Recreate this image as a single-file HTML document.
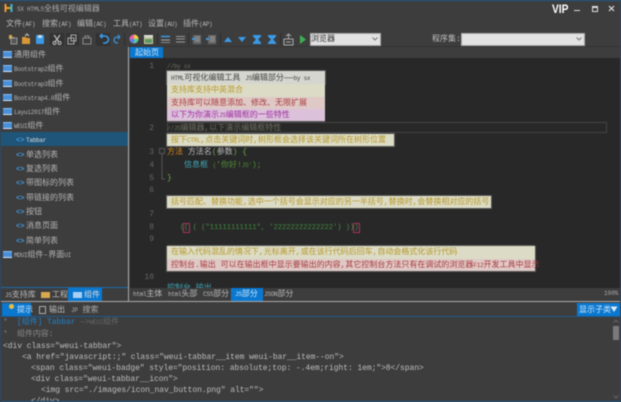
<!DOCTYPE html>
<html><head><meta charset="utf-8"><style>
html,body{margin:0;padding:0;background:#3d3d3d}
#a{position:relative;width:621px;height:402px;overflow:hidden;background:#3d3d3d;filter:blur(.5px);font-family:"Liberation Mono","WenQuanYi Zen Hei","Noto Sans CJK SC",monospace;font-size:8px;line-height:10px;color:#bbb}
.t{position:absolute;white-space:nowrap;margin-top:2px}
.r{position:absolute}
i{font-style:normal;font-size:6px;letter-spacing:-.25px}
.m{color:#b8b8b8}
.tr{color:#b5b5b5}
.g{color:#6e6e60}
.n{color:#666;width:12px;text-align:right;left:142px}
.c{color:#bdbdbd;font-size:8px;letter-spacing:-.07px}
.f{position:absolute;width:9px;height:5px;background:#4a90d8;border-top:1px solid #8fc0f0;border-bottom:1px solid #cfe3f7}
.sep{position:absolute;top:33px;width:1px;height:12px;background:#2e2e2e}
.b{left:16px;color:#3f9ae0;font-size:7px;font-weight:bold}
</style></head><body><div id="a">
<div class="r" style="left:0;top:0;width:621px;height:1px;background:#1d5a8c"></div>

<svg class="r" style="left:4px;top:3px" width="10" height="10"><path d="M1.5 1v8M1.5 5h6" stroke="#e8a030" stroke-width="2" fill="none"/><path d="M7.5 1v8" stroke="#3fb8c8" stroke-width="2"/></svg>
<div class="t" style="left:17px;top:3px;color:#a8a8a8"><i>SX HTML5</i>全栈可视编辑器</div>

<div class="t m" style="left:6px;top:18px">文件<i>(AF)</i></div>
<div class="t m" style="left:42px;top:18px">搜索<i>(AF)</i></div>
<div class="t m" style="left:77px;top:18px">编辑<i>(AC)</i></div>
<div class="t m" style="left:113px;top:18px">工具<i>(AT)</i></div>
<div class="t m" style="left:148px;top:18px">设置<i>(AU)</i></div>
<div class="t m" style="left:183px;top:18px">插件<i>(AP)</i></div>

<div class="t" style="left:552px;top:0;color:#fff;font:bold 12px 'Liberation Sans',sans-serif;transform:scaleX(.85);transform-origin:left">VIP</div>
<div class="r" style="left:574px;top:10px;width:6px;height:1px;background:#ddd"></div>
<div class="r" style="left:592px;top:6px;width:4px;height:3px;border:1px solid #ddd;border-top-width:2px"></div>
<svg class="r" style="left:608px;top:5px" width="7" height="7"><path d="M1 1l5 5M6 1l-5 5" stroke="#ddd" stroke-width="1.2"/></svg>

<!-- toolbar -->
<svg class="r" style="left:0;top:30px" width="310" height="18">
<path d="M9 5h3v2h2v2h-5z" fill="#d8a850"/><rect x="11" y="8" width="6" height="6" fill="#555" stroke="#aaa" stroke-width=".8"/>
<path d="M22 7h4l1 1h3v6h-8z" fill="#d89838"/><path d="M25 6l2-2 2 2" stroke="#ccc" fill="none"/>
<rect x="36" y="5" width="8" height="9" rx="1" fill="#3a9ae8"/><rect x="38" y="5" width="4" height="3" fill="#bcdcf4"/>
<rect x="51" y="3" width="13" height="13" fill="#333"/><path d="M54 5l5 7M60 5l-5 7" stroke="#bbb" stroke-width="1.2"/><circle cx="54.500" cy="13" r="1.500" fill="none" stroke="#bbb"/><circle cx="59.500" cy="13" r="1.500" fill="none" stroke="#bbb"/>
<rect x="66" y="3" width="13" height="13" fill="#333"/><rect x="68" y="8" width="6" height="6" fill="none" stroke="#aaa"/><rect x="71" y="5" width="5" height="6" fill="none" stroke="#aaa"/>
<path d="M83 8h8v6h-8zM85 8v-2h4v2" fill="none" stroke="#888"/>
<rect x="97" y="3" width="13" height="13" fill="#333"/><path d="M100 6h5a3 3 0 0 1 0 7h-2M100 6l2.500-2M100 6l2.500 2" stroke="#3a9ae8" stroke-width="1.600" fill="none"/>
<path d="M120 7h-3a3 3 0 0 0 0 6h1M120 7l-2-2M120 7l-2 2" stroke="#3a90d8" stroke-width="1.300" fill="none"/>
<circle cx="134" cy="9" r="4.500" fill="#e860a8"/><path d="M134 9V4.500a4.500 4.500 0 0 1 4.500 4.500z" fill="#e8d040"/><path d="M134 9h4.500a4.500 4.500 0 0 1-4.500 4.500z" fill="#50c8a0"/><path d="M134 9v4.500A4.500 4.500 0 0 1 129.500 9z" fill="#6080e0"/>
<rect x="144" y="5" width="9" height="9" fill="#c8c8a0"/><rect x="145" y="9" width="7" height="4" fill="#5a9a60"/><rect x="144" y="5" width="9" height="2" fill="#ddd"/>
<path d="M161 6.500h9" stroke="#3a9ae8" stroke-width="1.500"/><path d="M161 10h9" stroke="#aaa"/><path d="M161 12.500h9" stroke="#888"/>
<path d="M176 6.500h9M176 9h9M176 12h9" stroke="#999" stroke-width="1.100"/>
<rect x="193" y="5" width="8" height="9" fill="#666"/><path d="M195 7h5M195 9h5M195 11h5" stroke="#aaa" stroke-width=".8"/><rect x="192" y="8" width="3" height="2" fill="#3a9ae8"/>
<rect x="208" y="5" width="8" height="9" fill="#666"/><path d="M210 7h5M210 9h5M210 11h5" stroke="#aaa" stroke-width=".8"/><rect x="206" y="8" width="3" height="2" fill="#3a9ae8"/>
<path d="M224 12l4-5 4 5z" fill="#3a9ae8"/>
<path d="M238 7h8l-4 5z" fill="#3a9ae8"/>
<path d="M253 5h8v1.500l-3 3 3 3V14h-8v-1.500l3-3-3-3z" fill="#3a9ae8"/>
<path d="M268 5h8v1.500l-3 3 3 3V14h-8v-1.500l3-3-3-3z" fill="#3a9ae8"/>
<rect x="284" y="9" width="9" height="6" fill="none" stroke="#aaa"/><path d="M288.500 9V4M286 6l2.500-2 2.500 2" stroke="#aaa" fill="none"/><path d="M286 12h5" stroke="#aaa"/>
<path d="M300 5l6 4.500-6 4.500z" fill="#3cb050"/>
</svg>
<div class="sep" style="left:50px"></div><div class="sep" style="left:96px"></div><div class="sep" style="left:124px"></div><div class="sep" style="left:157px"></div><div class="sep" style="left:188px"></div><div class="sep" style="left:220px"></div><div class="sep" style="left:280px"></div>

<div class="r" style="left:310px;top:33px;width:69px;height:11px;background:#e2e2e2;border:1px solid #aaa;box-sizing:content-box"></div>
<div class="t" style="left:311px;top:33px;color:#333">浏览器</div>
<svg class="r" style="left:372px;top:37px" width="6" height="4"><path d="M.5.5l2.500 2.500L5.500.5" stroke="#777" fill="none"/></svg>
<div class="t" style="left:432px;top:33px;color:#c0c0c0">程序集:</div>
<div class="r" style="left:461px;top:33px;width:122px;height:11px;background:#e2e2e2;border:1px solid #aaa"></div>
<svg class="r" style="left:576px;top:37px" width="6" height="4"><path d="M.5.5l2.500 2.500L5.500.5" stroke="#777" fill="none"/></svg>

<div class="r" style="left:129px;top:46px;width:492px;height:1px;background:#333"></div>

<!-- tree -->
<div class="r" style="left:1px;top:132px;width:127px;height:14px;background:#1f5578"></div>
<div class="f" style="left:3px;top:51px"></div><div class="t tr" style="left:14px;top:49px">通用组件</div>
<div class="f" style="left:3px;top:65px"></div><div class="t tr" style="left:14px;top:63px"><i>Bootstrap2</i>组件</div>
<div class="f" style="left:3px;top:80px"></div><div class="t tr" style="left:14px;top:78px"><i>Bootstrap3</i>组件</div>
<div class="f" style="left:3px;top:94px"></div><div class="t tr" style="left:14px;top:92px"><i>Bootstrap4.0</i>组件</div>
<div class="f" style="left:3px;top:108px"></div><div class="t tr" style="left:14px;top:106px"><i>Layui2017</i>组件</div>
<div class="f" style="left:3px;top:122px"></div><div class="t tr" style="left:14px;top:120px"><i>WEUI</i>组件</div>
<div class="t b" style="top:134px">&lt;&gt;</div><div class="t" style="left:26px;top:134px;color:#ddd"><i>Tabbar</i></div>
<div class="t b" style="top:149px">&lt;&gt;</div><div class="t tr" style="left:26px;top:149px">单选列表</div>
<div class="t b" style="top:163px">&lt;&gt;</div><div class="t tr" style="left:26px;top:163px">复选列表</div>
<div class="t b" style="top:177px">&lt;&gt;</div><div class="t tr" style="left:26px;top:177px">带图标的列表</div>
<div class="t b" style="top:192px">&lt;&gt;</div><div class="t tr" style="left:26px;top:192px">带链接的列表</div>
<div class="t b" style="top:206px">&lt;&gt;</div><div class="t tr" style="left:26px;top:206px">按钮</div>
<div class="t b" style="top:220px">&lt;&gt;</div><div class="t tr" style="left:26px;top:220px">消息页面</div>
<div class="t b" style="top:235px">&lt;&gt;</div><div class="t tr" style="left:26px;top:235px">简单列表</div>
<div class="f" style="left:3px;top:251px"></div><div class="t tr" style="left:14px;top:249px"><i>MDUI</i>组件-界面<i>UI</i></div>

<div class="r" style="left:1px;top:287px;width:127px;height:1px;background:#1d6ba8"></div>
<div class="t" style="left:5px;top:289px;color:#bbb"><i>JS</i>支持库</div>
<div class="r" style="left:41px;top:292px;width:9px;height:6px;background:#d8a850"></div>
<div class="t" style="left:52px;top:289px;color:#bbb">工程</div>
<div class="r" style="left:68px;top:288px;width:34px;height:14px;background:#0a78d0"></div>
<div class="r" style="left:73px;top:292px;width:9px;height:6px;background:#a8d0f4"></div>
<div class="t" style="left:84px;top:289px;color:#ddd">组件</div>

<!-- editor -->
<div class="r" style="left:128px;top:47px;width:1px;height:255px;background:#aaa"></div>
<div class="r" style="left:130px;top:47px;width:33px;height:11px;background:#0a78d0"></div>
<div class="t" style="left:135px;top:47px;color:#cfe6f8">起始页</div>
<div class="r" style="left:130px;top:58px;width:491px;height:230px;background:#282828"></div>

<div class="t n" style="top:60px">1</div>
<div class="t g" style="left:167px;top:60px"><i>//by sx</i></div>

<div class="r" style="left:167px;top:71px;width:158px;height:13px;background:#d6d6d0;outline:1px solid #555"></div>
<div class="r" style="left:167px;top:84px;width:158px;height:13px;background:#dcdcc6"></div>
<div class="r" style="left:167px;top:97px;width:158px;height:12px;background:#dfc9c7"></div>
<div class="r" style="left:167px;top:109px;width:158px;height:12px;background:#dbc1da;box-shadow:0 1px 0 #555"></div>
<div class="t" style="left:171px;top:72px;color:#444"><i>HTML</i>可视化编辑工具 <i>JS</i>编辑部分——<i>by sx</i></div>
<div class="t" style="left:171px;top:84px;color:#b8982c">支持库支持中英混合</div>
<div class="t" style="left:171px;top:97px;color:#a83c3c">支持库可以随意添加、修改、无限扩展</div>
<div class="t" style="left:171px;top:109px;color:#a030a0">以下为你演示<i>JS</i>编辑框的一些特性</div>

<div class="r" style="left:167px;top:122px;width:440px;height:11px;border:1px solid #444;box-sizing:border-box"></div>
<div class="t n" style="top:122px">2</div>
<div class="t g" style="left:167px;top:122px"><i>//JS</i>编辑器,以下演示编辑框特性</div>
<div class="r" style="left:167px;top:134px;width:227px;height:12px;background:#dcdcc6;outline:1px solid #555"></div>
<div class="t" style="left:171px;top:134px;color:#b8982c">按下<i>CTRL</i>,点击关键词时,树形框会选择该关键词所在树形位置</div>

<div class="t n" style="top:146px">3</div>
<svg class="r" style="left:159px;top:148px" width="8" height="36"><rect x=".5" y=".5" width="5" height="5" fill="none" stroke="#555"/><path d="M3 6v25h3" stroke="#555" fill="none"/></svg>
<div class="t" style="left:167px;top:146px;color:#d8871a">方法 <span style="color:#bbb">方法名</span><span style="color:#6aa84a">(</span><span style="color:#bbb">参数</span><span style="color:#6aa84a">) {</span></div>
<div class="t n" style="top:159px">4</div>
<div class="t" style="left:184px;top:159px;color:#3fa8b8">信息框 <span style="color:#4f8f3a"><i>(</i>'你好!<i>JS'</i>);</span></div>
<div class="t n" style="top:172px">5</div>
<div class="t" style="left:167px;top:172px;color:#6aa84a">}</div>
<div class="t n" style="top:184px">6</div>
<div class="r" style="left:167px;top:196px;width:324px;height:12px;background:#dcdcc6;outline:1px solid #555"></div>
<div class="t" style="left:171px;top:196px;color:#b8982c">括号匹配、替换功能,选中一个括号会显示对应的另一半括号,替换时,会替换相对应的括号</div>
<div class="t n" style="top:208px">7</div>
<div class="t n" style="top:221px">8</div>
<div class="t" style="left:180px;top:221px;color:#3f8f3f;font-size:7px;letter-spacing:.05px">(<span style="outline:1px solid #a83060;color:#3f8f3f">(</span> ( ("11111111111", '22222222222222') ))<span style="outline:1px solid #a83060">)</span></div>
<div class="t n" style="top:233px">9</div>
<div class="r" style="left:167px;top:259px;width:368px;height:12px;background:#dfc9c7;box-shadow:0 0 0 1px #555"></div>
<div class="r" style="left:167px;top:246px;width:368px;height:13px;background:#dcdcc6;box-shadow:0 -1px 0 #555,1px 0 0 #555,-1px 0 0 #555"></div>
<div class="t" style="left:171px;top:246px;color:#b8982c">在输入代码混乱的情况下,光标离开,或在该行代码后回车,自动会格式化该行代码</div>
<div class="t" style="left:171px;top:259px;color:#a83c3c">控制台.输出 可以在输出框中显示要输出的内容,其它控制台方法只有在调试的浏览器<i>F12</i>开发工具中显示</div>
<div class="t n" style="top:271px">10</div>
<div class="t" style="left:167px;top:282px;color:#3fa8b8">控制台.输出</div>

<!-- doc tabs -->
<div class="r" style="left:130px;top:288px;width:491px;height:13px;background:#3d3d3d"></div>
<div class="t" style="left:133px;top:288px"><i>html</i>主体</div>
<div class="t" style="left:168px;top:288px"><i>html</i>头部</div>
<div class="t" style="left:203px;top:288px"><i>CSS</i>部分</div>
<div class="r" style="left:231px;top:288px;width:32px;height:13px;background:#0a78d0"></div>
<div class="t" style="left:235px;top:288px;color:#cfe6f8"><i>JS</i>部分</div>
<div class="t" style="left:264px;top:288px"><i>JSON</i>部分</div>
<div class="t" style="left:604px;top:287px;font-size:6px;color:#aaa">100%</div>

<div class="r" style="left:0;top:301px;width:621px;height:1px;background:#aaa"></div>

<!-- output panel -->
<div class="r" style="left:2px;top:303px;width:29px;height:13px;background:#0a78d0"></div>
<div class="r" style="left:9px;top:304px;width:5px;height:5px;border-radius:50%;background:#e8c040"></div>
<div class="t" style="left:17px;top:304px;color:#cfe6f8">提示</div>
<div class="r" style="left:39px;top:306px;width:5px;height:6px;border:1px solid #aaa"></div>
<div class="t" style="left:49px;top:304px">输出</div>
<div class="t" style="left:71px;top:304px;color:#aaa"><i>JP</i> 搜索</div>
<div class="r" style="left:577px;top:303px;width:44px;height:13px;background:#0a78d0"></div>
<div class="t" style="left:579px;top:304px;color:#cfe6f8">显示子类</div>
<svg class="r" style="left:610px;top:306px" width="8" height="7"><path d="M.5.5h7L4 6z" fill="#dcecf8"/></svg>
<div class="r" style="left:0;top:316px;width:621px;height:1px;background:#1d5a8c"></div>

<div class="t c" style="left:3px;top:316px;color:#777">*</div>
<div class="t c" style="left:17px;top:316px;color:#666"><span style="color:#1f82c8">[组件] Tabbar</span> —&gt;<i>WEUI</i>组件</div>
<div class="t c" style="left:3px;top:328px;color:#777">*</div>
<div class="t c" style="left:17px;top:328px;color:#888">组件内容:</div>
<div class="t c" style="left:3px;top:340px">&lt;div class="weui-tabbar"&gt;</div>
<div class="t c" style="left:22px;top:351px">&lt;a href="javascript:;" class="weui-tabbar__item weui-bar__item--on"&gt;</div>
<div class="t c" style="left:31px;top:362px">&lt;span class="weui-badge" style="position: absolute;top: -.4em;right: 1em;"&gt;8&lt;/span&gt;</div>
<div class="t c" style="left:31px;top:373px">&lt;div class="weui-tabbar__icon"&gt;</div>
<div class="t c" style="left:41px;top:384px">&lt;img src="./images/icon_nav_button.png" alt=""&gt;</div>
<div class="t c" style="left:31px;top:395px">&lt;/div&gt;</div>

<div class="r" style="left:613px;top:326px;width:6px;height:14px;background:#7a7a7a"></div>
<svg class="r" style="left:613px;top:319px" width="6" height="4"><path d="M.5 3.500L3 1l2.500 2.500" stroke="#666" fill="none"/></svg>
<svg class="r" style="left:613px;top:395px" width="6" height="4"><path d="M.5.500L3 3l2.500-2.500" stroke="#666" fill="none"/></svg>

<div class="r" style="left:0;top:401px;width:621px;height:1px;background:#1d5a8c"></div>
<div class="r" style="left:0;top:47px;width:1px;height:355px;background:#2a4a66"></div>
<div class="r" style="left:620px;top:1px;width:1px;height:401px;background:#2a4a66"></div>
</div></body></html>
